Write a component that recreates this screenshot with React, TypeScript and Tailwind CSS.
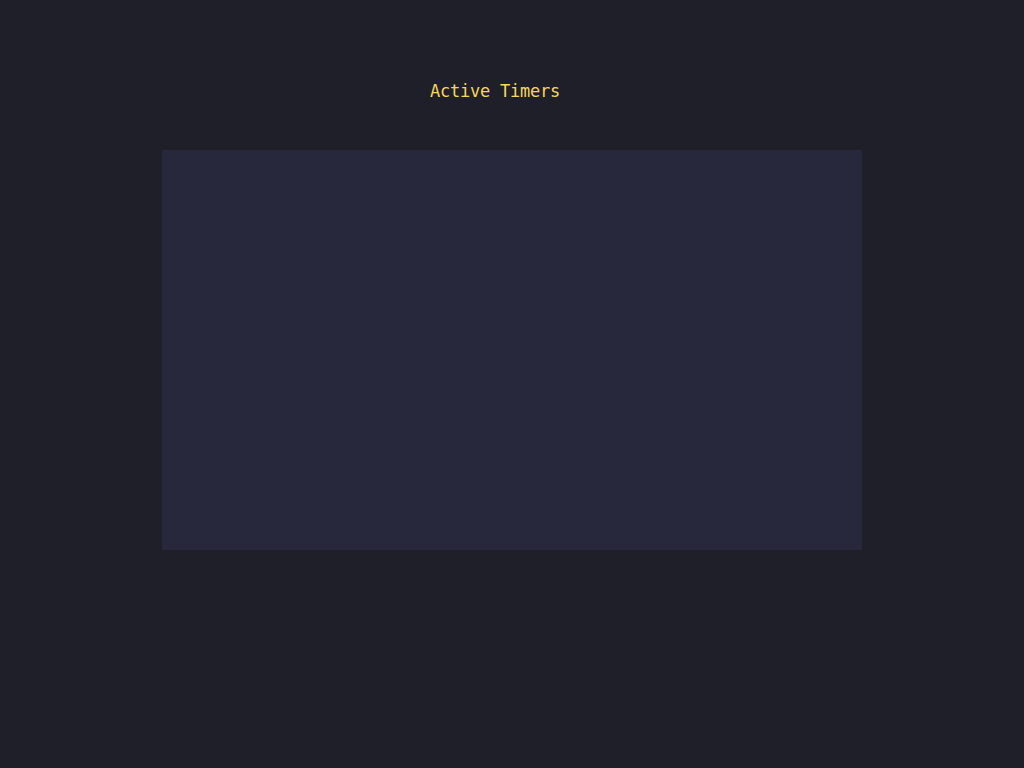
export default function App() {
  return (
    <div className="min-h-screen w-full bg-[#1f1f29] pt-[79px] font-['DejaVu_Sans_Mono',monospace]">
      {/* Header */}
      <div className="flex justify-center">
        <h1 className="text-[17px] leading-6 tracking-[-0.25px] text-[#f7d65a] mr-[34px]">Active Timers</h1>
      </div>

      {/* Timer list panel (empty) */}
      <div className="mx-auto mt-[47px] h-[400px] w-[700px] bg-[#28283d]"></div>
    </div>
  );
}
